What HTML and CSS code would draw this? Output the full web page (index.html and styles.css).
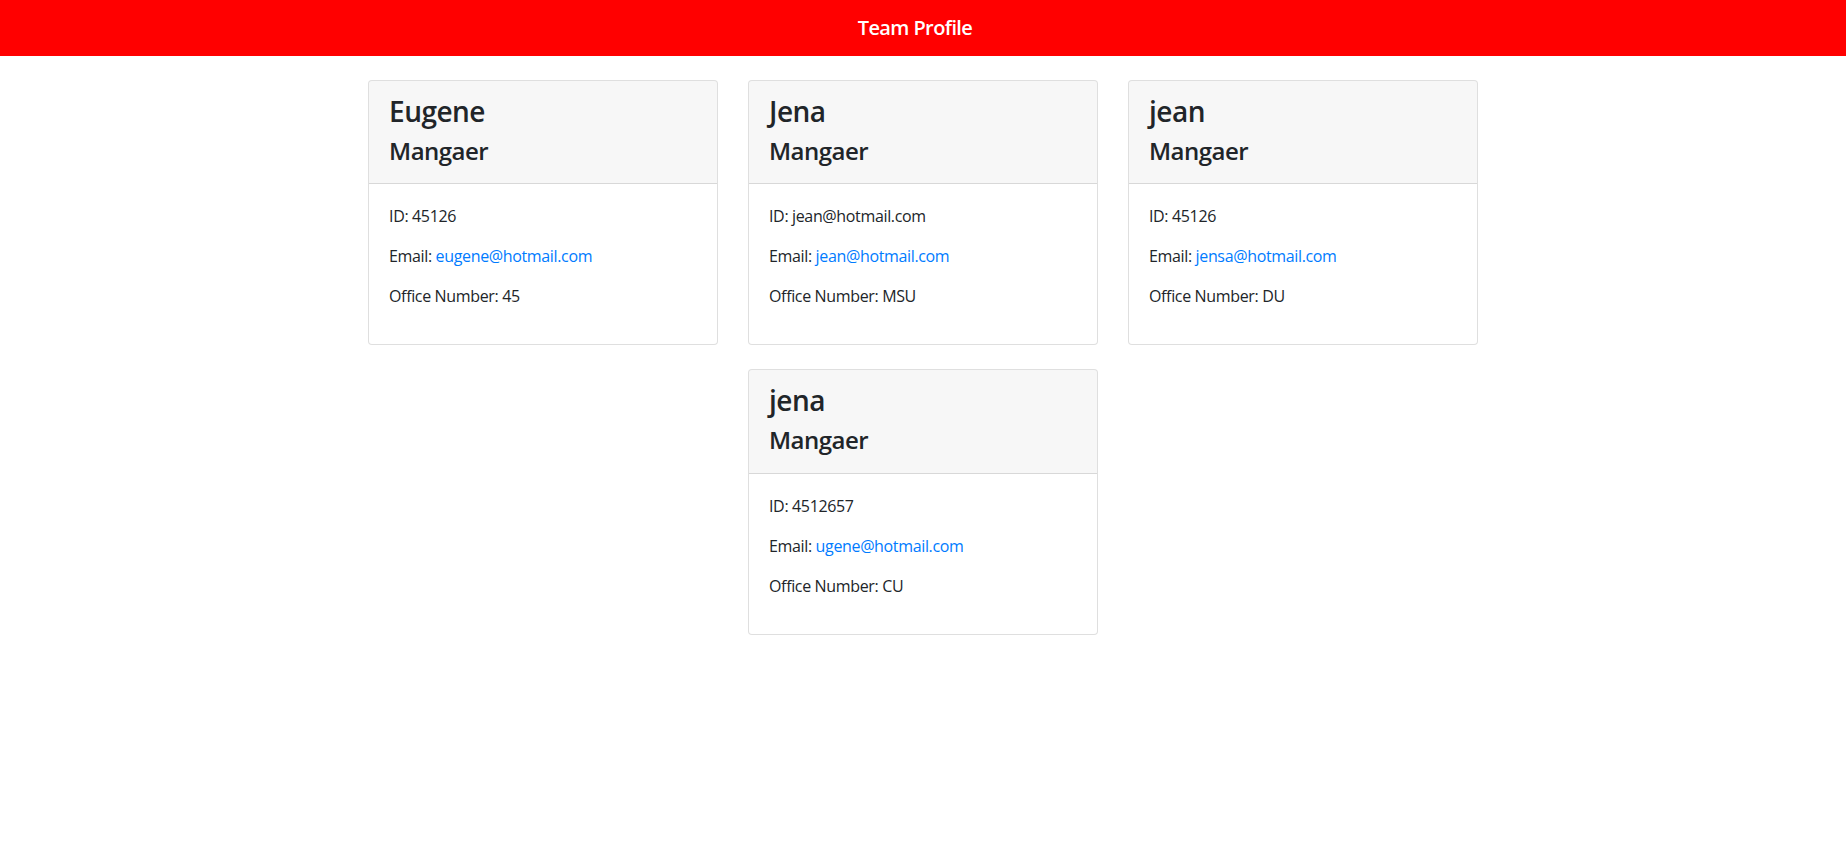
FILE: index.html
```html
<!DOCTYPE html>
<html lang="en">
<head>
<meta charset="utf-8">
<title>Team Profile</title>
<link rel="stylesheet" href="styles.css">
</head>
<body>
<nav class="navbar">
  <span class="brand">Team Profile</span>
</nav>
<main class="container">
  <div class="row">
    <div class="col">
      <div class="card">
        <div class="card-header">
          <h3 class="name">Eugene</h3>
          <h4 class="role">Mangaer</h4>
        </div>
        <div class="card-body">
          <p>ID: 45126</p>
          <p>Email: <a href="mailto:eugene@hotmail.com">eugene@hotmail.com</a></p>
          <p>Office Number: 45</p>
        </div>
      </div>
    </div>
    <div class="col">
      <div class="card">
        <div class="card-header">
          <h3 class="name">Jena</h3>
          <h4 class="role">Mangaer</h4>
        </div>
        <div class="card-body">
          <p>ID: jean@hotmail.com</p>
          <p>Email: <a href="mailto:jean@hotmail.com">jean@hotmail.com</a></p>
          <p>Office Number: MSU</p>
        </div>
      </div>
    </div>
    <div class="col">
      <div class="card">
        <div class="card-header">
          <h3 class="name">jean</h3>
          <h4 class="role">Mangaer</h4>
        </div>
        <div class="card-body">
          <p>ID: 45126</p>
          <p>Email: <a href="mailto:jensa@hotmail.com">jensa@hotmail.com</a></p>
          <p>Office Number: DU</p>
        </div>
      </div>
    </div>
    <div class="col">
      <div class="card">
        <div class="card-header">
          <h3 class="name">jena</h3>
          <h4 class="role">Mangaer</h4>
        </div>
        <div class="card-body">
          <p>ID: 4512657</p>
          <p>Email: <a href="mailto:ugene@hotmail.com">ugene@hotmail.com</a></p>
          <p>Office Number: CU</p>
        </div>
      </div>
    </div>
  </div>
</main>
</body>
</html>
```
FILE: styles.css
```css
* { box-sizing: border-box; }
html, body { margin: 0; padding: 0; }
body {
  font-family: "Open Sans", "Noto Sans", "Liberation Sans", sans-serif;
  font-size: 16px;
  line-height: 1.5;
  color: #212529;
  background: #fff;
}
.navbar {
  background: #ff0000;
  display: flex;
  justify-content: center;
  padding: 8px 16px;
}
.brand {
  color: #fff;
  font-weight: 600;
  font-size: 20px;
  line-height: 30px;
  letter-spacing: -0.6px;
  padding: 5px 0;
  margin-right: 16px;
}
.container {
  max-width: 1140px;
  margin: 0 auto;
  padding: 0 15px;
}
.row {
  display: flex;
  flex-wrap: wrap;
  justify-content: center;
  margin: 0 -15px;
  padding-top: 24px;
}
.col {
  flex: 0 0 33.3333%;
  max-width: 33.3333%;
  padding: 0 15px;
  margin-bottom: 24px;
}
.card {
  border: 1px solid rgba(0,0,0,.125);
  border-radius: 4px;
  background: #fff;
  overflow: hidden;
}
.card-header {
  background: rgba(0,0,0,.03);
  border-bottom: 1px solid rgba(0,0,0,.125);
  padding: 14px 20px 10px;
}
.name, .role {
  margin: 0 0 8px;
  font-weight: 600;
  line-height: 1.2;
  letter-spacing: -0.5px;
}
.name { font-size: 28px; }
.role { font-size: 24px; }
.card-body { padding: 20px; }
.card-body p { margin: 0 0 16px; letter-spacing: -0.35px; }
a { color: #007bff; text-decoration: none; }
```
